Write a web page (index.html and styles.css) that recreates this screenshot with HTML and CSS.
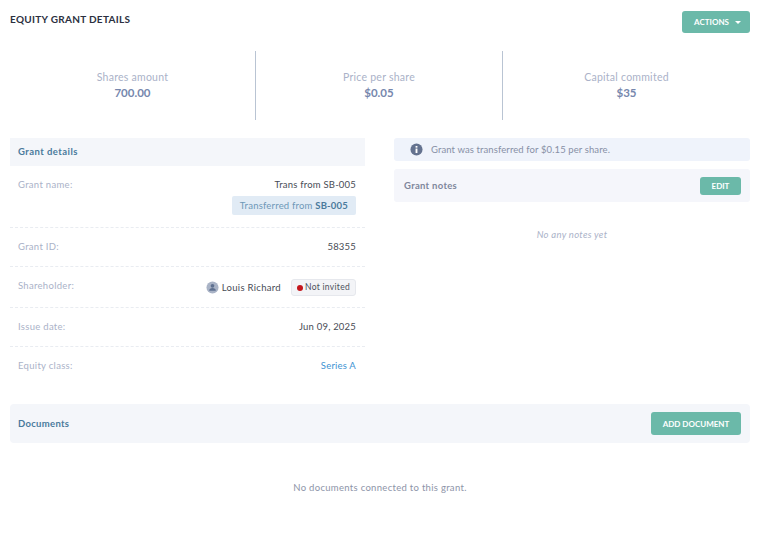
FILE: index.html
```html
<!DOCTYPE html>
<html lang="en">
<head>
  <meta charset="UTF-8">
  <title>Equity Grant Details</title>
  <link rel="stylesheet" href="styles.css">
</head>
<body>
  <div class="page-head">
    <h1>EQUITY GRANT DETAILS</h1>
    <button class="btn btn-actions">ACTIONS <span class="caret"></span></button>
  </div>

  <div class="stats">
    <div class="stat">
      <div class="stat-label">Shares amount</div>
      <div class="stat-value">700.00</div>
    </div>
    <div class="stat">
      <div class="stat-label">Price per share</div>
      <div class="stat-value">$0.05</div>
    </div>
    <div class="stat">
      <div class="stat-label">Capital commited</div>
      <div class="stat-value">$35</div>
    </div>
  </div>

  <div class="columns">
    <div class="col">
      <div class="section-head">Grant details</div>
      <div class="row row-name">
        <span class="row-label">Grant name:</span>
        <div class="row-stack">
          <span class="row-value">Trans from SB-005</span>
          <span class="transfer-tag">Transferred from <strong>SB-005</strong></span>
        </div>
      </div>
      <div class="row row-id">
        <span class="row-label">Grant ID:</span>
        <span class="row-value">58355</span>
      </div>
      <div class="row row-holder">
        <span class="row-label">Shareholder:</span>
        <div class="holder">
          <svg class="avatar" viewBox="0 0 14 14">
            <circle cx="7" cy="7" r="6.5" fill="#a9b3c6"/>
            <circle cx="7" cy="5.2" r="2" fill="#5f7190"/>
            <path d="M3.4 10.6c0-2 1.6-3 3.6-3s3.6 1 3.6 3z" fill="#5f7190"/>
          </svg>
          <span class="row-value holder-name">Louis Richard</span>
          <span class="status"><i class="dot"></i>Not invited</span>
        </div>
      </div>
      <div class="row row-date">
        <span class="row-label">Issue date:</span>
        <span class="row-value">Jun 09, 2025</span>
      </div>
      <div class="row row-class">
        <span class="row-label">Equity class:</span>
        <a class="row-link">Series A</a>
      </div>
    </div>

    <div class="col">
      <div class="info">
        <svg class="info-icon" viewBox="0 0 14 14">
          <circle cx="7" cy="7" r="6.5" fill="#64728f"/>
          <rect x="6" y="6" width="2" height="4.8" fill="#fff"/>
          <rect x="6" y="3.2" width="2" height="1.8" fill="#fff"/>
        </svg>
        Grant was transferred for $0.15 per share.
      </div>
      <div class="notes-head">
        <span>Grant notes</span>
        <button class="btn btn-edit">EDIT</button>
      </div>
      <div class="notes-empty">No any notes yet</div>
    </div>
  </div>

  <div class="docs-head">
    <span>Documents</span>
    <button class="btn btn-add">ADD DOCUMENT</button>
  </div>
  <div class="docs-empty">No documents connected to this grant.</div>
</body>
</html>
```

FILE: styles.css
```css
body {
  margin: 0;
  padding: 11px 15px 0 10px;
  font-family: "Lato", "Open Sans", sans-serif;
  font-size: 9.5px;
  letter-spacing: 0.3px;
  color: #3b3f4a;
  background: #fff;
}
.page-head {
  display: flex;
  justify-content: space-between;
  align-items: flex-start;
}
h1 {
  margin: 2px 0 0;
  font-size: 10px;
  line-height: 12px;
  font-weight: 700;
  color: #2b3040;
}
.btn {
  border: 0;
  border-radius: 3px;
  background: #6bb9a9;
  color: #fff;
  font-family: inherit;
  font-weight: 700;
  padding: 0;
}
.btn-actions {
  width: 68px;
  height: 22px;
  padding-left: 3px;
  font-size: 8px;
}
.caret {
  display: inline-block;
  margin-left: 4px;
  border-left: 3px solid transparent;
  border-right: 3px solid transparent;
  border-top: 3px solid #fff;
  vertical-align: 1px;
}
.stats {
  display: grid;
  grid-template-columns: 246px 247px 247px;
  height: 69px;
  margin-top: 18px;
}
.stat {
  display: flex;
  flex-direction: column;
  align-items: center;
  justify-content: center;
  border-right: 1px solid #b9c4d3;
  padding-bottom: 1px;
  box-sizing: border-box;
}
.stat:last-child {
  border-right: 0;
}
.stat-label {
  font-size: 10.5px;
  line-height: 14px;
  letter-spacing: 0.25px;
  color: #aab2c8;
}
.stat-value {
  margin-top: 2px;
  font-size: 11.5px;
  line-height: 14px;
  font-weight: 700;
  letter-spacing: 0;
  color: #7687ad;
}
.columns {
  display: grid;
  grid-template-columns: 355px 356px;
  column-gap: 29px;
  margin-top: 18px;
}
.section-head {
  height: 28px;
  line-height: 28px;
  padding-left: 8px;
  background: #f4f6fa;
  font-size: 9.5px;
  font-weight: 700;
  letter-spacing: 0.45px;
  color: #4a7a9c;
}
.row {
  display: flex;
  justify-content: space-between;
  padding: 0 9px 0 8px;
  border-bottom: 1px dashed #e9ecf1;
  box-sizing: border-box;
}
.row-name { height: 62px; padding-top: 13px; }
.row-id { height: 39px; padding-top: 13px; }
.row-holder { height: 41px; padding-top: 13px; }
.row-date { height: 39px; padding-top: 13px; }
.row-class { height: 39px; padding-top: 13px; border-bottom: 0; }
.row-label {
  line-height: 12px;
  color: #aab2c8;
}
.row-value {
  line-height: 12px;
  letter-spacing: 0.2px;
  color: #484c56;
}
.holder-name {
  letter-spacing: 0.3px;
}
.row-link {
  line-height: 12px;
  letter-spacing: 0.2px;
  color: #3d93d3;
}
.row-stack {
  display: flex;
  flex-direction: column;
  align-items: flex-end;
}
.transfer-tag {
  margin-top: 5px;
  height: 19px;
  line-height: 19px;
  padding: 0 8px;
  border-radius: 2px;
  background: #e1ebf5;
  letter-spacing: 0.2px;
  color: #6e98b8;
}
.transfer-tag strong {
  color: #4a7a9c;
}
.holder {
  display: flex;
  align-items: center;
  height: 17px;
  margin-top: -1px;
}
.avatar {
  width: 13px;
  height: 13px;
  margin-right: 3px;
}
.status {
  display: flex;
  align-items: center;
  height: 17px;
  margin-left: 10px;
  padding: 0 5px 2px 5px;
  box-sizing: border-box;
  border: 1px solid #e6e8ed;
  border-radius: 3px;
  background: #f3f4f7;
  font-size: 8.5px;
  color: #4d515c;
}
.dot {
  width: 6px;
  height: 6px;
  margin: 2px 2px 0 0;
  border-radius: 50%;
  background: #c4161c;
}
.info {
  display: flex;
  align-items: center;
  height: 23px;
  padding-left: 16px;
  border-radius: 3px;
  background: #eff3fb;
  letter-spacing: 0.1px;
  color: #8790a6;
}
.info-icon {
  width: 13px;
  height: 13px;
  margin-right: 8px;
}
.notes-head {
  display: flex;
  justify-content: space-between;
  align-items: center;
  height: 33px;
  margin-top: 8px;
  padding: 0 9px 0 10px;
  border-radius: 3px;
  background: #f5f6fb;
  font-weight: 700;
  color: #7f879b;
}
.btn-edit {
  width: 41px;
  height: 18px;
  font-size: 8px;
}
.notes-empty {
  margin-top: 27px;
  text-align: center;
  font-size: 9.5px;
  line-height: 12px;
  font-style: italic;
  color: #aab2c8;
}
.docs-head {
  display: flex;
  justify-content: space-between;
  align-items: center;
  height: 39px;
  margin-top: 18px;
  padding: 0 9px 0 8px;
  border-radius: 4px;
  background: #f4f6fa;
  font-weight: 700;
  color: #4a7a9c;
}
.btn-add {
  width: 90px;
  height: 23px;
  font-size: 8px;
}
.docs-empty {
  margin-top: 39px;
  text-align: center;
  font-size: 9.5px;
  line-height: 12px;
  color: #8d94a8;
}
```
